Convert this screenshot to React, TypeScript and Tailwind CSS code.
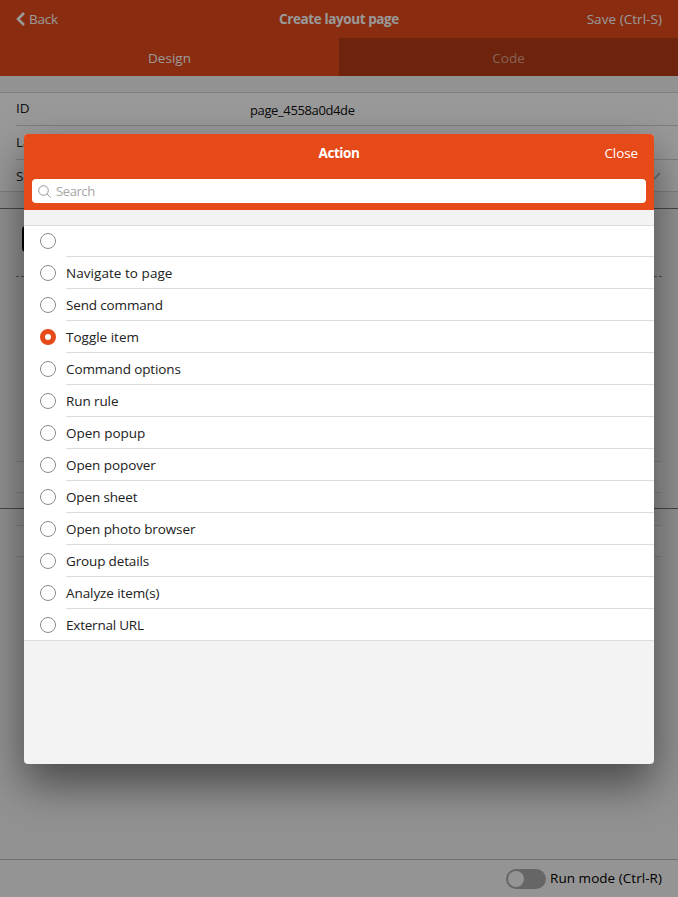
import clsx from 'clsx';

const actions = [
  { label: '', tracking: '' },
  { label: 'Navigate to page', tracking: 'tracking-[0.05px]' },
  { label: 'Send command', tracking: 'tracking-[-0.15px]' },
  { label: 'Toggle item', tracking: '' },
  { label: 'Command options', tracking: 'tracking-[-0.12px]' },
  { label: 'Run rule', tracking: 'tracking-[-0.1px]' },
  { label: 'Open popup', tracking: '' },
  { label: 'Open popover', tracking: 'tracking-[-0.08px]' },
  { label: 'Open sheet', tracking: 'tracking-[-0.15px]' },
  { label: 'Open photo browser', tracking: 'tracking-[-0.1px]' },
  { label: 'Group details', tracking: 'tracking-[-0.15px]' },
  { label: 'Analyze item(s)', tracking: 'tracking-[-0.08px]' },
  { label: 'External URL', tracking: 'tracking-[-0.22px]' },
];

function Radio({ checked }: { checked: boolean }) {
  return (
    <span
      className={clsx(
        'size-4 shrink-0 rounded-full',
        checked ? 'border-[5px] border-[#e64a19]' : 'border border-[#8a8a8a]',
      )}
    />
  );
}

function ActionPopup() {
  return (
    <div className="absolute top-[134px] left-6 flex h-[630px] w-[630px] flex-col overflow-hidden rounded bg-[#f3f3f3] shadow-[0_20px_44px_rgba(0,0,0,0.5)]">
      <header className="h-[76px] bg-[#e64a19] text-white">
        <div className="grid h-[38px] grid-cols-3 items-center px-4">
          <span />
          <span className="text-center font-bold tracking-[-0.45px]">Action</span>
          <span className="text-right tracking-[-0.1px]">Close</span>
        </div>
        <div className="mx-2 mt-[7px] flex h-6 items-center rounded bg-white pl-[6px]">
          <svg className="mt-px size-[13px]" viewBox="0 0 13 13" fill="none" stroke="#8c8c8c" strokeWidth="0.9">
            <circle cx="5.5" cy="5.5" r="4.8" />
            <path d="M9 9L12.7 12.5" />
          </svg>
          <span className="ml-[5px] text-[13px] tracking-[-0.4px] text-[#a6a6a6]">Search</span>
        </div>
      </header>
      <ul className="mt-[15px] bg-white shadow-[inset_0_1px_0_#dcdcdc,inset_0_-1px_0_#dcdcdc]">
        {actions.map(({ label, tracking }, i) => (
          <li key={i} className="flex h-8 items-center pl-4">
            <Radio checked={label === 'Toggle item'} />
            <span
              className={clsx(
                'ml-[10px] flex h-8 flex-1 items-center border-[#dcdcdc]',
                i < actions.length - 1 && 'border-b',
                tracking,
              )}
            >
              {label}
            </span>
          </li>
        ))}
      </ul>
    </div>
  );
}

export default function App() {
  return (
    <div className="relative flex h-[897px] w-[678px] flex-col overflow-hidden bg-[#f3f3f3] font-['Open_Sans','Noto_Sans',sans-serif] text-[13.5px] leading-5 text-[#212121]">
      <header className="bg-[#e64a19] text-white">
        <div className="grid h-[38px] grid-cols-3 items-center px-4">
          <span className="flex items-center gap-1">
            <svg className="h-[14px] w-[9px]" viewBox="0 0 9 14" fill="none" stroke="white" strokeWidth="2.6">
              <path d="M8 1L2 7L8 13" />
            </svg>
            <span className="tracking-[-0.25px]">Back</span>
          </span>
          <span className="text-center font-bold tracking-[-0.4px]">Create layout page</span>
          <span className="text-right tracking-[0.05px]">Save (Ctrl-S)</span>
        </div>
        <div className="grid h-[38px] grid-cols-2 text-center">
          <span className="h-[38px] pt-[10px]">Design</span>
          <span className="h-[38px] bg-[#b83b14] pt-[10px] text-[#e0a593]">Code</span>
        </div>
      </header>

      <section className="mt-4 h-[100px] border-y border-[#d2d2d2] bg-white pl-4">
        <div className="flex h-[33px] border-b border-[#d2d2d2]">
          <span className="w-[234px] pt-[5px]">ID</span>
          <span className="pt-[7px] text-[13px] tracking-[-0.38px] text-[#111]">page_4558a0d4de</span>
        </div>
        <div className="h-[34px] border-b border-[#d2d2d2] pt-[6px]">Label</div>
        <div className="flex h-[31px] justify-between pt-[6px] pr-[17px]">
          <span>Sidebar</span>
          <svg className="mt-1 size-3" viewBox="0 0 12 12" fill="none" stroke="#b0b0b0" strokeWidth="1.5">
            <path d="M1 6L4.5 9.5L11 3" />
          </svg>
        </div>
      </section>

      <section className="mt-4 flex h-[300px] flex-col border-t border-[#777] px-4">
        <div className="flex h-[68px] items-start border-b border-dashed border-[#888] pt-[17px] pl-[6px]">
          <span className="h-[26px] w-20 rounded bg-black" />
        </div>
        <div className="mt-[184px] h-8 border-y border-[#d8d8d8] bg-[#f8f8f8]" />
      </section>
      <section className="flex-1 border-t border-[#777] px-4 pt-4">
        <div className="h-8 border-y border-[#d8d8d8] bg-[#f8f8f8]" />
      </section>

      <footer className="flex h-[38px] items-center justify-end border-t border-[#bdbdbd] bg-[#f7f7f7] pr-4">
        <span className="mt-px h-5 w-10 rounded-full bg-[#aaa] p-[2px]">
          <span className="block size-4 rounded-full bg-[#f7f7f7]" />
        </span>
        <span className="-mt-px ml-1 tracking-[0.04px] text-black">Run mode (Ctrl-R)</span>
      </footer>

      <div className="absolute inset-0 bg-black/40" />
      <ActionPopup />
    </div>
  );
}
